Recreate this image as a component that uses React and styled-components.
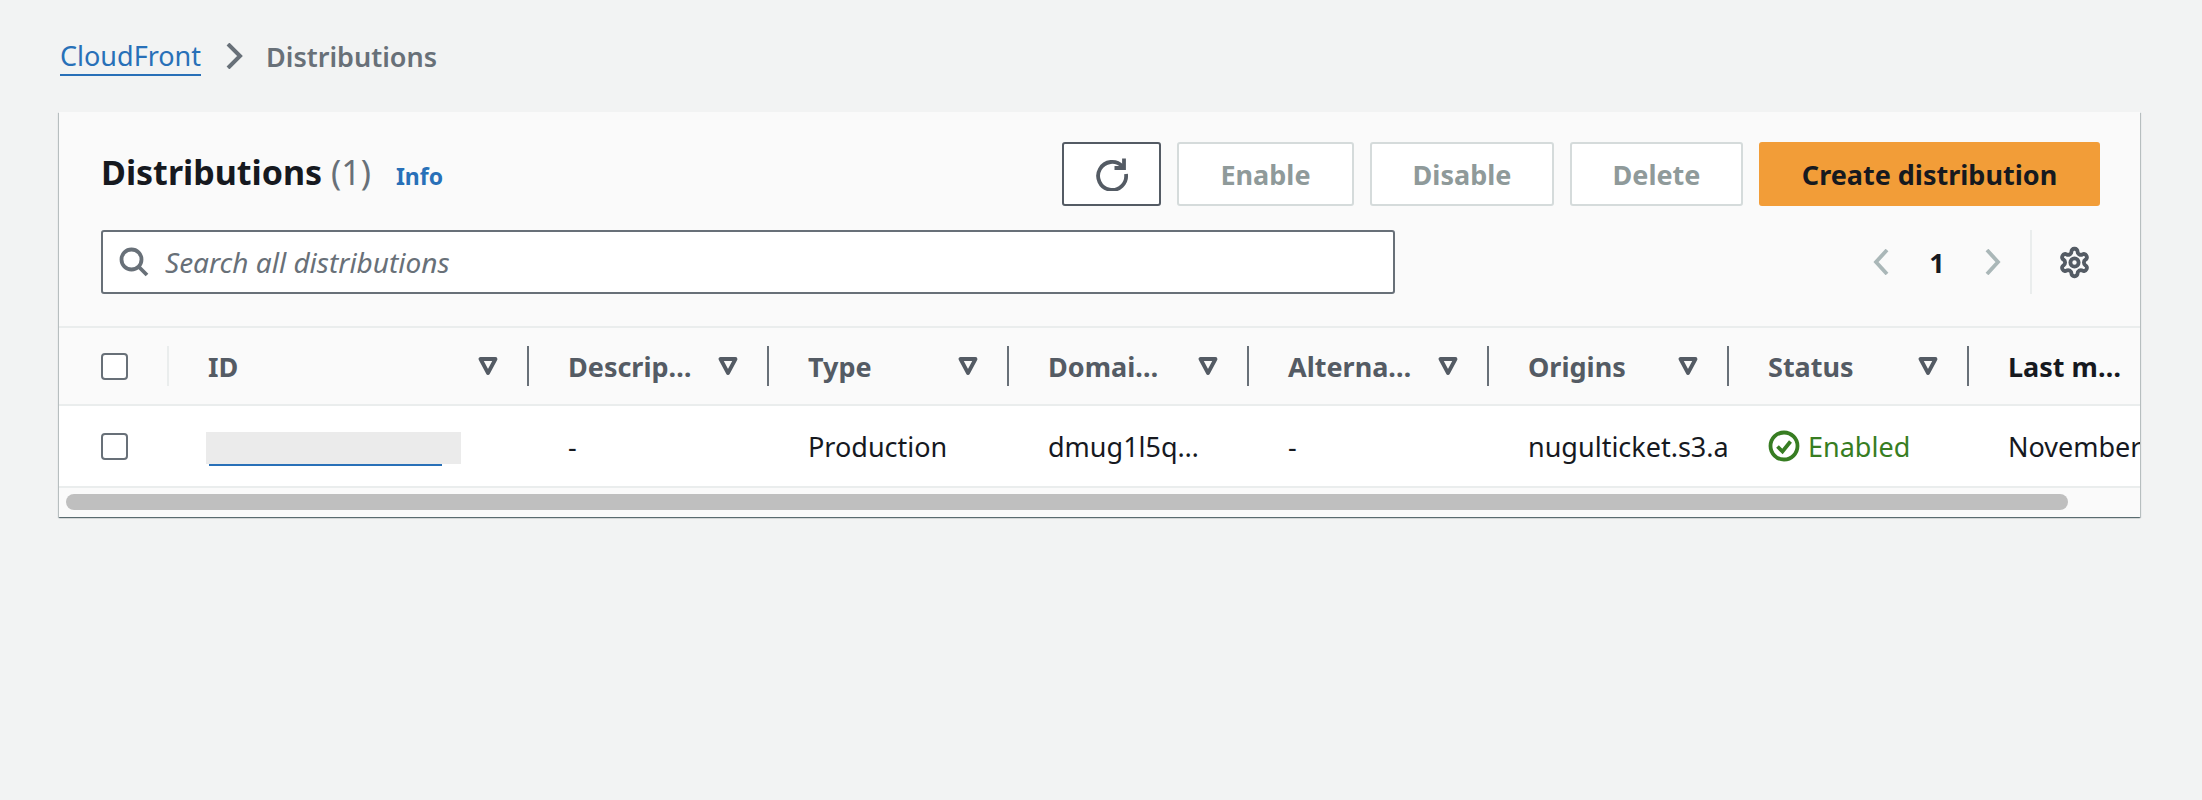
import React from 'react';
import styled, { createGlobalStyle } from 'styled-components';

const GlobalStyle = createGlobalStyle`
  html, body {
    margin: 0;
    padding: 0;
    background: #f2f3f3;
    font-family: "Noto Sans", "Open Sans", sans-serif;
    color: #16191f;
  }
`;

const Page = styled.div`
  width: 2202px;
  height: 800px;
  box-sizing: border-box;
  padding: 36px 62px 0 59px;
  overflow: hidden;
`;

const Breadcrumbs = styled.nav`
  display: flex;
  align-items: center;
  height: 40px;
  margin-bottom: 36px;
  padding-left: 1px;
  font-size: 27px;
`;

const CrumbLink = styled.a`
  color: #2870b8;
  border-bottom: 2px solid #2870b8;
  line-height: 37px;
  height: 37px;
`;

const CrumbCurrent = styled.span`
  color: #687078;
  font-weight: 600;
`;

const CrumbSep = styled.svg`
  width: 18px;
  height: 26px;
  margin: 0 23px 0 24px;
  fill: none;
  stroke: #687078;
  stroke-width: 4;
`;

const Card = styled.section`
  background: #fafafa;
  box-shadow: 0 1px 1px 0 rgba(0, 28, 36, 0.45), 1px 1px 1px 0 rgba(0, 28, 36, 0.18), -1px 1px 1px 0 rgba(0, 28, 36, 0.18);
  height: 405px;
  display: flex;
  flex-direction: column;
`;

const Toolbar = styled.div`
  height: 216px;
  flex: none;
  box-sizing: border-box;
  padding: 30px 40px 0 42px;
  border-bottom: 2px solid #eaeded;
  display: flex;
  flex-direction: column;
  gap: 24px;
`;

const ToolRow = styled.div`
  display: flex;
  align-items: center;
  justify-content: space-between;
`;

const TitleGroup = styled.div`
  display: flex;
  align-items: baseline;
  gap: 25px;
  padding-bottom: 4px;
`;

const Title = styled.h1`
  margin: 0;
  font-size: 34px;
  font-weight: 700;
  color: #16191f;
`;

const Count = styled.span`
  font-weight: 400;
  color: #687078;
`;

const InfoLink = styled.a`
  font-size: 23px;
  font-weight: 700;
  color: #2870b8;
`;

const Actions = styled.div`
  display: flex;
  gap: 16px;
`;

const Button = styled.button`
  height: 64px;
  box-sizing: border-box;
  width: ${props => props.$width}px;
  padding: 0;
  border-radius: 3px;
  font-family: inherit;
  font-size: 27px;
  font-weight: 700;
  display: flex;
  align-items: center;
  justify-content: center;
  border: 2px solid ${props => props.$primary ? '#f29d38' : props.$disabled ? '#d5dbdb' : '#545b64'};
  background: ${props => props.$primary ? '#f29d38' : '#fff'};
  color: ${props => props.$primary ? '#16191f' : props.$disabled ? '#8f9a9a' : '#545b64'};
`;

const SearchBox = styled.div`
  width: 1294px;
  height: 64px;
  box-sizing: border-box;
  background: #fff;
  border: 2px solid #687078;
  border-radius: 3px;
  display: flex;
  align-items: center;
  padding-left: 16px;
  gap: 16px;
`;

const SearchText = styled.span`
  font-size: 28px;
  font-style: italic;
  color: #687078;
`;

const Pager = styled.div`
  display: flex;
  align-items: center;
  height: 64px;
  padding-right: 9px;
`;

const PageNumber = styled.span`
  font-size: 27px;
  font-weight: 700;
  width: 96px;
  text-align: center;
`;

const PagerDivider = styled.div`
  width: 2px;
  height: 64px;
  background: #eaeded;
  margin: 0 26px 0 29px;
`;

const TableWrap = styled.div`
  flex: 1;
  overflow: hidden;
`;

const Row = styled.div`
  display: flex;
  width: 2200px;
  height: ${props => props.$height}px;
  box-sizing: border-box;
  background: ${props => props.$head ? '#fafafa' : '#fff'};
  border-bottom: 2px solid #eaeded;
`;

const SelectCell = styled.div`
  width: 108px;
  flex: none;
  box-sizing: border-box;
  padding-left: 42px;
  display: flex;
  align-items: center;
`;

const Checkbox = styled.div`
  width: 27px;
  height: 27px;
  box-sizing: border-box;
  background: #fff;
  border: 2px solid #687078;
  border-radius: 4px;
`;

const HeadDivider = styled.div`
  width: 2px;
  height: 40px;
  flex: none;
  align-self: center;
  background: ${props => props.$light ? '#eaeded' : '#687078'};
`;

const HeadCell = styled.div`
  width: ${props => props.$width}px;
  flex: none;
  box-sizing: border-box;
  padding: 0 29px 0 39px;
  display: flex;
  align-items: center;
  justify-content: space-between;
  font-size: 27px;
  font-weight: 700;
  white-space: nowrap;
  color: ${props => props.$active ? '#16191f' : '#545b64'};
`;

const FilterIcon = styled.svg`
  width: 20px;
  height: 20px;
  fill: none;
  stroke: #545b64;
  stroke-width: 3.8;
  stroke-linejoin: round;
`;

const BodyCell = styled.div`
  width: ${props => props.$width}px;
  flex: none;
  box-sizing: border-box;
  padding-left: ${props => props.$pad || 41}px;
  display: flex;
  align-items: center;
  gap: 8px;
  font-size: 27px;
  white-space: nowrap;
  overflow: hidden;
  color: ${props => props.$green ? '#377d22' : '#16191f'};
`;

const RedactedLink = styled.div`
  display: flex;
  flex-direction: column;
  margin-top: 5px;
`;

const Redaction = styled.div`
  width: 255px;
  height: 32px;
  background: #ebebeb;
`;

const RedactedUnderline = styled.div`
  width: 233px;
  height: 2px;
  margin-left: 3px;
  background: #2870b8;
`;

const ScrollTrack = styled.div`
  height: 29px;
  padding: 6px 7px;
  box-sizing: border-box;
`;

const ScrollThumb = styled.div`
  width: 2002px;
  height: 16px;
  background: #bfbfbf;
  border-radius: 8px;
`;

const columns = [
  { label: 'ID', width: 360, light: true },
  { label: 'Descrip…', width: 240 },
  { label: 'Type', width: 240 },
  { label: 'Domai…', width: 240 },
  { label: 'Alterna…', width: 240 },
  { label: 'Origins', width: 240 },
  { label: 'Status', width: 240 },
];

const RefreshIcon = () => (
  <svg width="34" height="34" viewBox="0 0 34 34" fill="none" stroke="#545b64" strokeWidth="3.8">
    <path d="M27.5 9.5A14 14 0 1 0 31 17" />
    <path d="M29 1.5V11H19.5" />
  </svg>
);

const SearchIcon = () => (
  <svg width="30" height="30" viewBox="0 0 30 30" fill="none" stroke="#687078" strokeWidth="3.8">
    <circle cx="12.5" cy="12.5" r="10" />
    <path d="M19.5 19.5L28 28" />
  </svg>
);

const PagerChevron = ({ left }) => (
  <svg width="16" height="26" viewBox="0 0 16 26" fill="none" stroke="#aab7b8" strokeWidth="3.8">
    <path d={left ? 'M14 1L3 13l11 12' : 'M2 1l11 12L2 25'} />
  </svg>
);

const GearIcon = () => (
  <svg width="33" height="33" viewBox="0 0 24 24" fill="none" stroke="#545b64" strokeWidth="2.8" strokeLinejoin="round">
    <path d="M12.22 2h-.44a2 2 0 0 0-2 2v.18a2 2 0 0 1-1 1.73l-.43.25a2 2 0 0 1-2 0l-.15-.08a2 2 0 0 0-2.73.73l-.22.38a2 2 0 0 0 .73 2.73l.15.1a2 2 0 0 1 1 1.72v.51a2 2 0 0 1-1 1.74l-.15.09a2 2 0 0 0-.73 2.73l.22.38a2 2 0 0 0 2.73.73l.15-.08a2 2 0 0 1 2 0l.43.25a2 2 0 0 1 1 1.73V20a2 2 0 0 0 2 2h.44a2 2 0 0 0 2-2v-.18a2 2 0 0 1 1-1.73l.43-.25a2 2 0 0 1 2 0l.15.08a2 2 0 0 0 2.73-.73l.22-.39a2 2 0 0 0-.73-2.73l-.15-.08a2 2 0 0 1-1-1.74v-.5a2 2 0 0 1 1-1.74l.15-.09a2 2 0 0 0 .73-2.73l-.22-.38a2 2 0 0 0-2.73-.73l-.15.08a2 2 0 0 1-2 0l-.43-.25a2 2 0 0 1-1-1.73V4a2 2 0 0 0-2-2z" />
    <circle cx="12" cy="12" r="3" />
  </svg>
);

const StatusIcon = () => (
  <svg width="32" height="32" viewBox="0 0 32 32" fill="none" stroke="#377d22" strokeWidth="3.8" style={{ flex: 'none' }}>
    <circle cx="16" cy="16" r="13.5" />
    <path d="M9.5 16.5l5 5 8-10" />
  </svg>
);

const App = () => (
  <Page>
    <GlobalStyle />
    <Breadcrumbs>
      <CrumbLink>CloudFront</CrumbLink>
      <CrumbSep viewBox="0 0 18 26"><path d="M3 1l12 12L3 25" /></CrumbSep>
      <CrumbCurrent>Distributions</CrumbCurrent>
    </Breadcrumbs>
    <Card>
      <Toolbar>
        <ToolRow>
          <TitleGroup>
            <Title>Distributions <Count>(1)</Count></Title>
            <InfoLink>Info</InfoLink>
          </TitleGroup>
          <Actions>
            <Button $width={99}><RefreshIcon /></Button>
            <Button $width={177} $disabled>Enable</Button>
            <Button $width={184} $disabled>Disable</Button>
            <Button $width={173} $disabled>Delete</Button>
            <Button $width={341} $primary>Create distribution</Button>
          </Actions>
        </ToolRow>
        <ToolRow>
          <SearchBox>
            <SearchIcon />
            <SearchText>Search all distributions</SearchText>
          </SearchBox>
          <Pager>
            <PagerChevron left />
            <PageNumber>1</PageNumber>
            <PagerChevron />
            <PagerDivider />
            <GearIcon />
          </Pager>
        </ToolRow>
      </Toolbar>
      <TableWrap>
        <Row $head $height={78}>
          <SelectCell><Checkbox /></SelectCell>
          {columns.map(col => (
            <React.Fragment key={col.label}>
              <HeadDivider $light={col.light} />
              <HeadCell $width={col.width - 2}>
                {col.label}
                <FilterIcon viewBox="0 0 20 20"><path d="M2.5 3h15L10 17z" /></FilterIcon>
              </HeadCell>
            </React.Fragment>
          ))}
          <HeadDivider />
          <HeadCell $width={200} $active>Last m…</HeadCell>
        </Row>
        <Row $height={82}>
          <SelectCell><Checkbox /></SelectCell>
          <BodyCell $width={360} $pad={39}>
            <RedactedLink>
              <Redaction />
              <RedactedUnderline />
            </RedactedLink>
          </BodyCell>
          <BodyCell $width={240}>-</BodyCell>
          <BodyCell $width={240}>Production</BodyCell>
          <BodyCell $width={240}>dmug1l5q…</BodyCell>
          <BodyCell $width={240}>-</BodyCell>
          <BodyCell $width={240}>nugulticket.s3.a</BodyCell>
          <BodyCell $width={240} $green><StatusIcon />Enabled</BodyCell>
          <BodyCell $width={240}>November</BodyCell>
        </Row>
        <ScrollTrack><ScrollThumb /></ScrollTrack>
      </TableWrap>
    </Card>
  </Page>
);

export default App;
